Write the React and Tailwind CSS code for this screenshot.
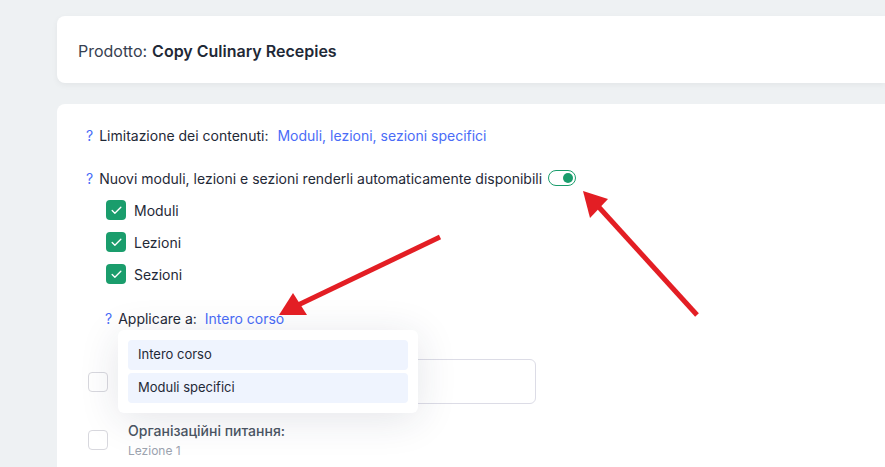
import { Check } from "lucide-react";

const font = { fontFamily: "Inter, 'Noto Sans', sans-serif" };

function Hint() {
  return <span className="text-[#4a6cf7] mr-[6px]">?</span>;
}

function GreenCheck({ label }) {
  return (
    <div className="flex items-center h-[20px]">
      <span className="w-[20px] h-[20px] rounded-[4px] bg-[#1a9d6c] flex items-center justify-center">
        <Check size={13} strokeWidth={2.5} className="text-white" />
      </span>
      <span className="ml-[8px] text-[14px] text-[#1f2937]">{label}</span>
    </div>
  );
}

function EmptyBox() {
  return <span className="block w-[20px] h-[20px] rounded-[4px] border border-[#d8d8de] bg-white shrink-0" />;
}

export default function App() {
  return (
    <div className="w-[885px] h-[467px] bg-[#eef1f3] overflow-hidden relative" style={font}>
      <div className="pl-[57px] pt-[16px] flex flex-col gap-[21px]">
        <div className="h-[67px] bg-white rounded-l-[8px] shadow-[0_2px_6px_rgba(0,0,0,0.05)] flex items-center pl-[21px] pt-[2px] text-[16px]">
          <span className="text-[#374151]">Prodotto:</span>
          <span className="ml-[5px] font-semibold text-[#1f2937]">Copy Culinary Recepies</span>
        </div>

        <div className="h-[400px] bg-white rounded-tl-[8px] pl-[29px] pt-[21px] text-[14px] text-[#1f2937]">
          <div className="flex items-center h-[20px]">
            <Hint />
            <span>Limitazione dei contenuti:</span>
            <span className="ml-[9px] text-[#4a6cf7]">Moduli, lezioni, sezioni specifici</span>
          </div>

          <div className="flex items-center h-[20px] mt-[23px]">
            <Hint />
            <span>Nuovi moduli, lezioni e sezioni renderli automaticamente disponibili</span>
            <span className="ml-[6px] w-[28px] h-[16px] rounded-full border-[1.5px] border-[#1a9d6c] flex items-center justify-end pr-[2px]">
              <span className="w-[10px] h-[10px] rounded-full bg-[#1a9d6c]" />
            </span>
          </div>

          <div className="ml-[20px] mt-[12px] flex flex-col gap-[12px]">
            <GreenCheck label="Moduli" />
            <GreenCheck label="Lezioni" />
            <GreenCheck label="Sezioni" />
          </div>

          <div className="relative ml-[19px] mt-[24px] flex items-center h-[20px]">
            <Hint />
            <span>Applicare a:</span>
            <span className="ml-[8px] text-[#4a6cf7]">Intero corso</span>

            <div className="absolute z-10 left-[13px] top-[22px] w-[300px] bg-white rounded-[6px] p-[10px] flex flex-col gap-[3px] shadow-[0_6px_40px_rgba(30,40,70,0.12)]">
              <div className="h-[30px] rounded-[4px] bg-[#eff4fe] flex items-center pl-[10px] text-[13px] text-[#1f2937]">Intero corso</div>
              <div className="h-[30px] rounded-[4px] bg-[#eff4fe] flex items-center pl-[10px] text-[13px] text-[#1f2937]">Moduli specifici</div>
            </div>
          </div>

          <div className="flex items-center mt-[31px] ml-[2px]">
            <EmptyBox />
            <div className="ml-[20px] w-[408px] h-[45px] rounded-[6px] border border-[#dcdce6]" />
          </div>

          <div className="flex items-center mt-[17px] ml-[2px]">
            <EmptyBox />
            <div className="ml-[20px]">
              <div className="text-[14px] leading-[20px] font-medium text-[#4b5563]">Організаційні питання:</div>
              <div className="text-[12px] leading-[16px] text-[#9ca3af] mt-[2px]">Lezione 1</div>
            </div>
          </div>
        </div>
      </div>

      <svg className="absolute inset-0 z-20 pointer-events-none" width="885" height="467" viewBox="0 0 885 467">
        <line x1="697" y1="315" x2="596" y2="204" stroke="#e31e24" strokeWidth="5" />
        <polygon points="583,191 608,199 590,218" fill="#e31e24" />
        <line x1="440" y1="237" x2="296" y2="306" stroke="#e31e24" strokeWidth="5" />
        <polygon points="279,315 293,293 307,315" fill="#e31e24" />
      </svg>
    </div>
  );
}
